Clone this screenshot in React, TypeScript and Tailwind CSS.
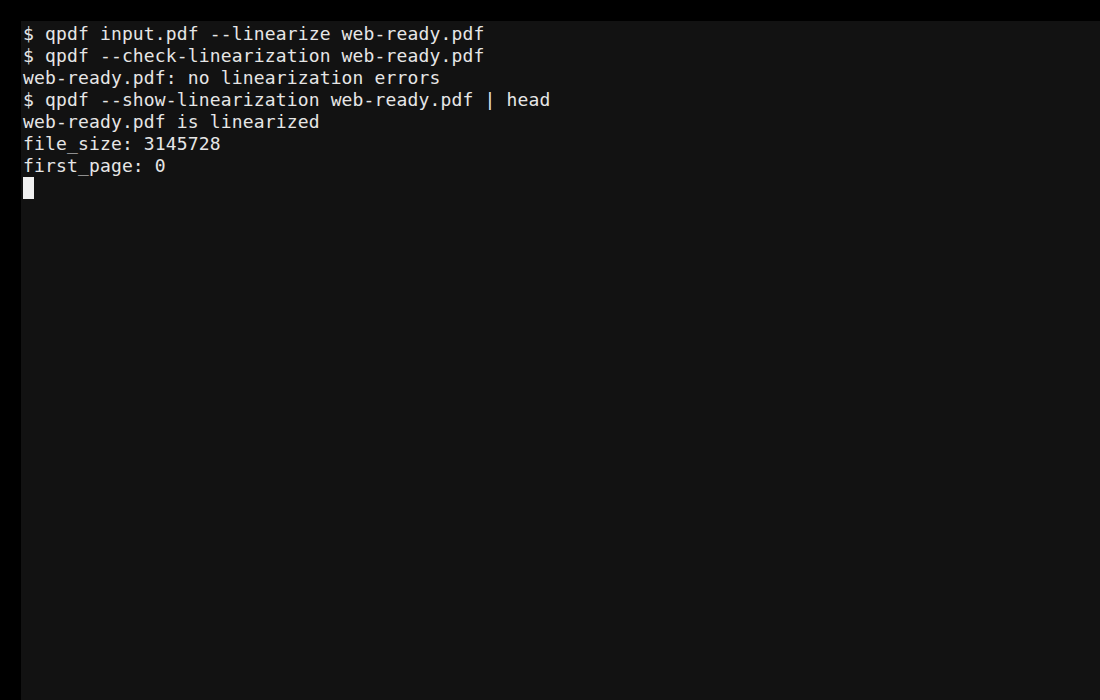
const lines = [
  "$ qpdf input.pdf --linearize web-ready.pdf",
  "$ qpdf --check-linearization web-ready.pdf",
  "web-ready.pdf: no linearization errors",
  "$ qpdf --show-linearization web-ready.pdf | head",
  "web-ready.pdf is linearized",
  "file_size: 3145728",
  "first_page: 0",
];

export default function App() {
  return (
    <div className="h-[700px] w-[1100px] overflow-hidden bg-black pl-[21px] pt-[21px]">
      <div
        className="h-full w-full bg-[#121212] pl-[2px] pt-[2px] text-[18px] leading-[22px] tracking-[0.15px] text-[#e6e6e6]"
        style={{ fontFamily: '"DejaVu Sans Mono", monospace' }}
      >
        {lines.map((line, i) => (
          <div key={i} className="h-[22px] whitespace-pre">
            {line}
          </div>
        ))}
        <div className="h-[22px]">
          <div className="h-[22px] w-[11px] bg-[#f0f0f0]" />
        </div>
      </div>
    </div>
  );
}
